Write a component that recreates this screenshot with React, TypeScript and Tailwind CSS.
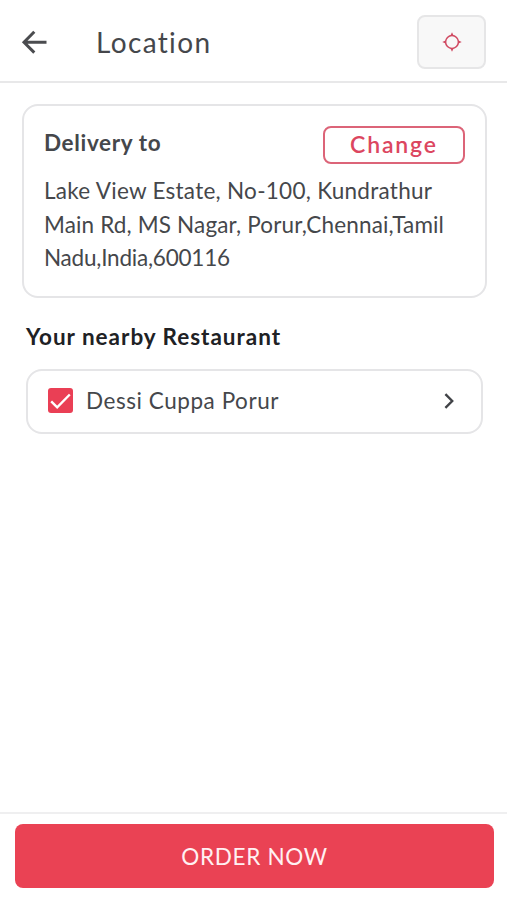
import React from 'react';

const BackArrow = () => (
  <svg className="w-[26px] h-6" viewBox="0 0 26 24" fill="none" stroke="#4b4c4f" strokeWidth="3">
    <path d="M25.5 12.2H3.2M13.3 1.8L3 12.2L13.3 22.6" />
  </svg>
);

const Crosshair = () => (
  <svg className="w-5 h-5" viewBox="0 0 20 20" fill="none" stroke="#d04a62" strokeWidth="1.5">
    <circle cx="10" cy="10" r="6.4" />
    <path
      d="M10 0.3L11.8 4H8.2ZM10 19.7L11.8 16H8.2ZM0.3 10L4 8.2V11.8ZM19.7 10L16 8.2V11.8Z"
      fill="#d04a62"
      stroke="none"
    />
  </svg>
);

const App = () => {
  const addressLines = [
    { text: "Lake View Estate, No-100, Kundrathur", className: "tracking-[0.27px]" },
    { text: "Main Rd, MS Nagar, Porur,Chennai,Tamil", className: "tracking-[0.15px]" },
    { text: "Nadu,India,600116", className: "tracking-[-0.22px]" }
  ];

  return (
    <div className="h-[900px] flex flex-col bg-white font-['Lato',sans-serif] text-[#45474b]">
      <header className="h-[83px] shrink-0 flex items-center border-b-2 border-[#e8e8e9] px-[21px] pt-[3px]">
        <BackArrow />
        <h1 className="ml-[49px] text-[28px] leading-9 tracking-[1.35px]">Location</h1>
        <button className="ml-auto w-[69px] h-[54px] flex items-center justify-center rounded-lg border-2 border-[#e6e6e7] bg-[#f8f8f8]">
          <Crosshair />
        </button>
      </header>

      <main className="flex-1 pl-[22px] pr-5 pt-[21px]">
        <section className="h-[194px] rounded-2xl border-2 border-[#e5e5e7] px-5 pt-5">
          <div className="flex items-start justify-between">
            <h2 className="mt-[3px] text-[22.5px] leading-7 font-bold tracking-[0.65px]">Delivery to</h2>
            <button className="w-[142px] h-[38px] flex items-center justify-center rounded-lg border-2 border-[#dc6478] pb-[2px] text-[23px] font-semibold tracking-[1.85px] text-[#dc4660]">
              Change
            </button>
          </div>
          <p className="mt-[10px] text-[22.5px] leading-[33.7px] whitespace-nowrap">
            {addressLines.map((line) => (
              <span key={line.text} className="block">
                <span className={line.className}>{line.text}</span>
              </span>
            ))}
          </p>
        </section>

        <section className="px-1 mt-[25px]">
          <h2 className="text-[22.5px] leading-7 font-bold tracking-[0.98px] text-[#202124]">Your nearby Restaurant</h2>
          <div className="mt-[18px] h-[65px] w-[457px] flex items-center rounded-2xl border-2 border-[#e5e5e7] pl-5 pr-[27px] pb-[2px]">
            <svg className="w-[25px] h-[25px]" viewBox="0 0 25 25" fill="none">
              <rect width="25" height="25" rx="3" fill="#ea3f55" />
              <path d="M3.2 13.3L9.2 19.3L21.8 6.5" stroke="#fff" strokeWidth="2.4" />
            </svg>
            <span className="ml-[13px] text-[22.5px] leading-7 tracking-[0.55px]">Dessi Cuppa Porur</span>
            <svg className="ml-auto w-[10px] h-4" viewBox="0 0 10 16" fill="none" stroke="#414347" strokeWidth="2.4">
              <path d="M1.4 1.2L8.2 8L1.4 14.8" />
            </svg>
          </div>
        </section>
      </main>

      <footer className="h-[88px] shrink-0 border-t-2 border-[#efeff0] pl-[15px] pr-[13px] pt-[10px]">
        <button className="w-full h-[64px] rounded-lg bg-[#ea4254] pt-px text-[22.5px] tracking-[0.7px] text-[#fff0f2]">
          ORDER NOW
        </button>
      </footer>
    </div>
  );
};

export default App;
